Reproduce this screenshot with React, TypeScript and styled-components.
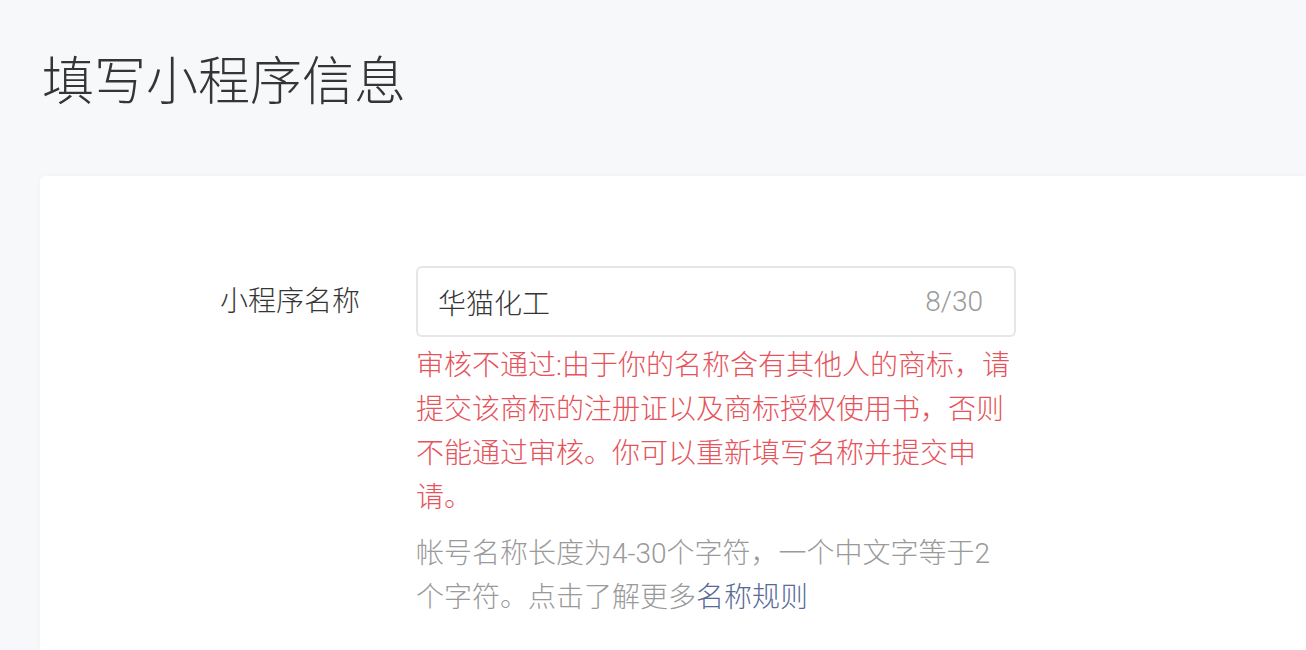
import React from "react";
import styled, { createGlobalStyle } from "styled-components";

const GlobalStyle = createGlobalStyle`
  html, body {
    margin: 0;
    padding: 0;
    background: #f7f8fa;
    overflow: hidden;
  }
  body {
    font-family: Roboto, "Noto Sans CJK SC", sans-serif;
    font-weight: 300;
    color: #353535;
  }
`;

const Page = styled.div`
  padding: 50px 0 0 40px;
  width: 1400px;
  box-sizing: border-box;
`;

const Title = styled.h1`
  margin: 0 0 0 2px;
  font-size: 52px;
  font-weight: 300;
  line-height: 66px;
  color: #353535;
`;

const Card = styled.div`
  margin-top: 60px;
  background: #fff;
  border-radius: 6px;
  box-shadow: 0 0 6px rgba(0, 0, 0, 0.03);
  padding: 90px 0 60px;
  min-height: 500px;
`;

const FormRow = styled.div`
  display: flex;
  align-items: flex-start;
`;

const Label = styled.label`
  width: 320px;
  flex-shrink: 0;
  text-align: right;
  font-size: 28px;
  line-height: 71px;
  color: #353535;
  margin-right: 56px;
`;

const Field = styled.div`
  width: 600px;
  display: flex;
  flex-direction: column;
`;

const InputBox = styled.div`
  display: flex;
  align-items: center;
  justify-content: space-between;
  height: 71px;
  box-sizing: border-box;
  border: 2px solid #e6e6e8;
  border-radius: 6px;
  padding: 0 31px 0 20px;
`;

const InputText = styled.span`
  font-size: 28px;
  color: #353535;
`;

const Counter = styled.span`
  font-size: 28px;
  color: #9a9a9a;
`;

const Message = styled.p<{ $tone: "error" | "hint" }>`
  margin: ${(p) => (p.$tone === "error" ? "7px 0 0" : "12px 0 0")};
  font-size: 28px;
  line-height: 44px;
  color: ${(p) => (p.$tone === "error" ? "#e5535b" : "#9a9a9a")};
  word-break: break-all;
`;

const Link = styled.a`
  color: #576b95;
  text-decoration: none;
`;

export default function App() {
  return (
    <>
      <GlobalStyle />
      <Page>
        <Title>填写小程序信息</Title>
        <Card>
          <FormRow>
            <Label>小程序名称</Label>
            <Field>
              <InputBox>
                <InputText>华猫化工</InputText>
                <Counter>8/30</Counter>
              </InputBox>
              <Message $tone="error">
                审核不通过:由于你的名称含有其他人的商标，请提交该商标的注册证以及商标授权使用书，否则不能通过审核。你可以重新填写名称并提交申请。
              </Message>
              <Message $tone="hint">
                帐号名称长度为4-30个字符，一个中文字等于2个字符。点击了解更多<Link href="#">名称规则</Link>
              </Message>
            </Field>
          </FormRow>
        </Card>
      </Page>
    </>
  );
}
